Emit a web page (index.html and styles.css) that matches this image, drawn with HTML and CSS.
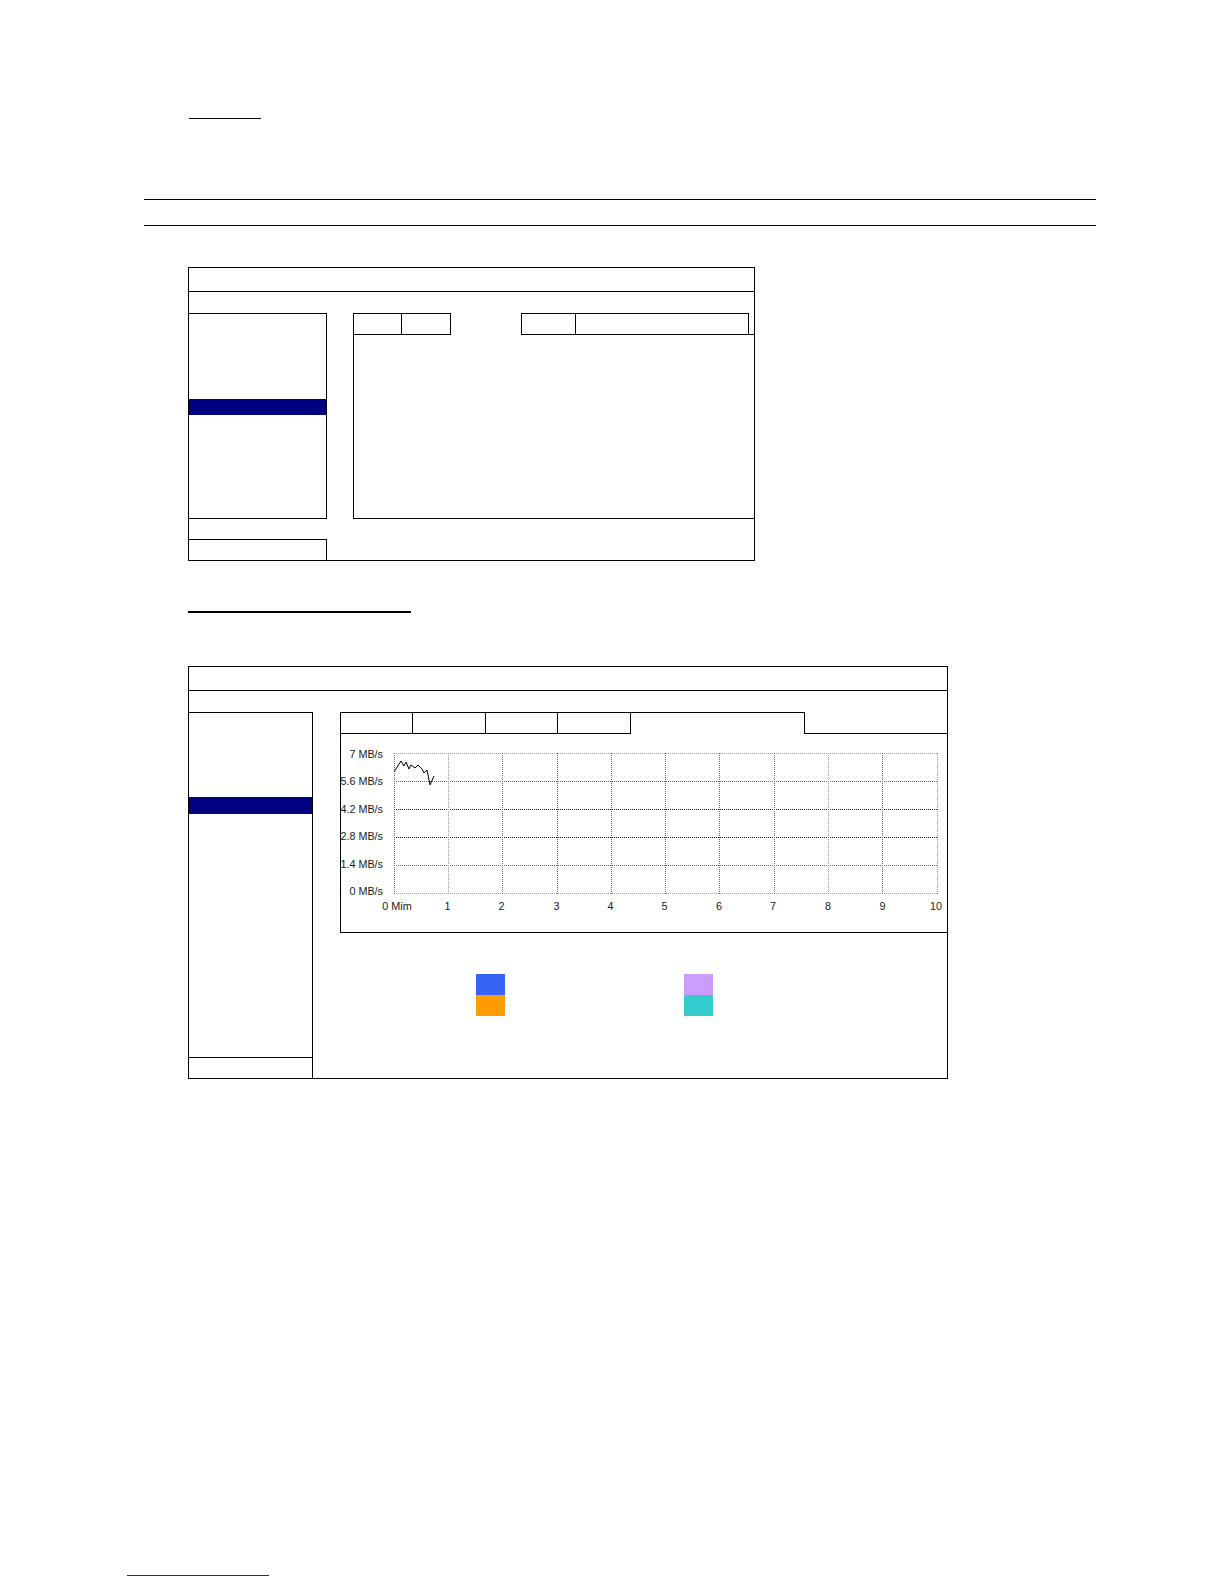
FILE: index.html
```html
<!DOCTYPE html>
<html lang="en">
<head>
<meta charset="utf-8">
<title>Network status</title>
<link rel="stylesheet" href="styles.css">
</head>
<body>
<div class="page">
  <div class="heading-rule"></div>
  <div class="rule-band"></div>

  <div class="window win-1">
    <div class="win-title"></div>
    <div class="win-main">
      <div class="side-menu">
        <div class="menu-list"><div class="menu-sel"></div></div>
      </div>
      <div class="content">
        <div class="tabs">
          <div class="tab tab-edge"></div>
          <div class="tab"></div>
          <div class="tab tab-active"></div>
          <div class="tab tab-edge"></div>
          <div class="tab"></div>
          <div class="tab-fill"></div>
        </div>
        <div class="panel"></div>
      </div>
    </div>
    <div class="win-foot"></div>
  </div>

  <div class="subheading-rule"></div>

  <div class="window win-2">
    <div class="win-title"></div>
    <div class="win-main">
      <div class="side-menu">
        <div class="menu-list"><div class="menu-sel"></div></div>
        <div class="menu-foot"></div>
      </div>
      <div class="content">
        <div class="tabs">
          <div class="tab tab-edge"></div>
          <div class="tab"></div>
          <div class="tab"></div>
          <div class="tab"></div>
          <div class="tab tab-active"></div>
          <div class="tab-fill"></div>
        </div>
        <div class="panel">
          <svg class="chart" width="606" height="198" viewBox="0 0 606 198">
            <g class="grid">
              <line class="g-light" x1="53" y1="19.5" x2="596" y2="19.5"/>
              <line class="g-mid" x1="53" y1="47.5" x2="596" y2="47.5"/>
              <line class="g-dark" x1="53" y1="75.5" x2="596" y2="75.5"/>
              <line class="g-dark" x1="53" y1="103.5" x2="596" y2="103.5"/>
              <line class="g-mid" x1="53" y1="131.5" x2="596" y2="131.5"/>
              <line class="g-light" x1="53" y1="159.5" x2="596" y2="159.5"/>
              <line class="g-mid" x1="53.5" y1="19" x2="53.5" y2="160"/>
              <line class="g-light" x1="107.5" y1="19" x2="107.5" y2="160"/>
              <line class="g-mid" x1="161.5" y1="19" x2="161.5" y2="160"/>
              <line class="g-mid" x1="216.5" y1="19" x2="216.5" y2="160"/>
              <line class="g-mid" x1="270.5" y1="19" x2="270.5" y2="160"/>
              <line class="g-mid" x1="324.5" y1="19" x2="324.5" y2="160"/>
              <line class="g-mid" x1="378.5" y1="19" x2="378.5" y2="160"/>
              <line class="g-mid" x1="433.5" y1="19" x2="433.5" y2="160"/>
              <line class="g-light" x1="487.5" y1="19" x2="487.5" y2="160"/>
              <line class="g-mid" x1="541.5" y1="19" x2="541.5" y2="160"/>
              <line class="g-light" x1="596.5" y1="19" x2="596.5" y2="160"/>
            </g>
            <polyline class="trace" points="53,38 60,27 63,32 65,28 68,35 70,31 74,34 77,31 81,35 83,39 86,36 89,51 93,42"/>
            <g class="axis-label y-label">
              <text x="42" y="24">7 MB/s</text>
              <text x="42" y="51">5.6 MB/s</text>
              <text x="42" y="78.5">4.2 MB/s</text>
              <text x="42" y="106">2.8 MB/s</text>
              <text x="42" y="133.5">1.4 MB/s</text>
              <text x="42" y="161">0 MB/s</text>
            </g>
            <g class="axis-label x-label">
              <text x="56" y="176">0 Mim</text>
              <text x="106.5" y="176">1</text>
              <text x="160.5" y="176">2</text>
              <text x="215.5" y="176">3</text>
              <text x="269.5" y="176">4</text>
              <text x="323.5" y="176">5</text>
              <text x="378" y="176">6</text>
              <text x="432" y="176">7</text>
              <text x="487" y="176">8</text>
              <text x="541.5" y="176">9</text>
              <text x="595" y="176">10</text>
            </g>
          </svg>
        </div>
        <div class="legend">
          <div class="legend-col">
            <div class="swatch sw-blue"></div>
            <div class="swatch sw-orange"></div>
          </div>
          <div class="legend-col">
            <div class="swatch sw-lilac"></div>
            <div class="swatch sw-teal"></div>
          </div>
        </div>
      </div>
    </div>
  </div>

  <div class="link-rule"></div>
</div>
</body>
</html>
```

FILE: styles.css
```css
html, body {
  margin: 0;
  padding: 0;
  background: #fff;
}

body {
  font-family: "Liberation Sans", Arial, sans-serif;
  color: #000;
}

.page {
  width: 1224px;
  height: 1584px;
  overflow: hidden;
}

.heading-rule {
  margin: 102px 0 0 189px;
  width: 72px;
  height: 16px;
  border-bottom: 1px solid #000;
}

.rule-band {
  margin: 80px 0 0 144px;
  width: 952px;
  height: 25px;
  border-top: 1px solid #000;
  border-bottom: 1px solid #000;
}

.window {
  box-sizing: border-box;
  border: 1px solid #000;
  display: flex;
  flex-direction: column;
}

.win-title {
  height: 23px;
  border-bottom: 1px solid #000;
}

.win-main {
  margin-top: 21px;
  display: flex;
}

.side-menu {
  box-sizing: border-box;
  border-top: 1px solid #000;
  border-right: 1px solid #000;
  display: flex;
  flex-direction: column;
}

.menu-list {
  flex: 1;
}

.menu-sel {
  background: #000080;
}

.content {
  flex: 1;
  display: flex;
  flex-direction: column;
}

.tabs {
  display: flex;
  height: 22px;
}

.tab {
  box-sizing: border-box;
  height: 22px;
  border-top: 1px solid #000;
  border-right: 1px solid #000;
  border-bottom: 1px solid #000;
}

.tab-edge {
  border-left: 1px solid #000;
}

.tab-fill {
  flex: 1;
  box-sizing: border-box;
  height: 22px;
  border-bottom: 1px solid #000;
}

.panel {
  box-sizing: border-box;
  border-left: 1px solid #000;
  border-bottom: 1px solid #000;
}

/* ---------- window 1 ---------- */
.win-1 {
  margin: 41px 0 0 188px;
  width: 567px;
  height: 294px;
}

.win-1 .win-main {
  height: 206px;
}

.win-1 .side-menu {
  width: 138px;
  border-bottom: 1px solid #000;
}

.win-1 .menu-list {
  padding-top: 85px;
}

.win-1 .menu-sel {
  height: 16px;
}

.win-1 .content {
  margin-left: 26px;
}

.win-1 .tab:nth-child(1) { width: 49px; }
.win-1 .tab:nth-child(2) { width: 49px; }
.win-1 .tab:nth-child(3) { width: 70px; }
.win-1 .tab:nth-child(4) { width: 55px; }
.win-1 .tab:nth-child(5) { width: 173px; }

.win-1 .tab-active {
  border: none;
}

.win-1 .panel {
  flex: 1;
}

.win-foot {
  box-sizing: border-box;
  margin-top: 20px;
  width: 138px;
  height: 21px;
  border-top: 1px solid #000;
  border-right: 1px solid #000;
}

/* ---------- heading 2 ---------- */
.subheading-rule {
  margin: 34px 0 0 188px;
  width: 223px;
  height: 16px;
  border-bottom: 2px solid #000;
}

/* ---------- window 2 ---------- */
.win-2 {
  margin: 53px 0 0 188px;
  width: 760px;
  height: 413px;
}

.win-2 .win-main {
  flex: 1;
}

.win-2 .side-menu {
  width: 124px;
}

.win-2 .menu-list {
  padding-top: 84px;
  border-bottom: 1px solid #000;
}

.win-2 .menu-sel {
  height: 17px;
}

.menu-foot {
  height: 20px;
}

.win-2 .content {
  margin-left: 27px;
}

.win-2 .tab:nth-child(1) { width: 73px; }
.win-2 .tab:nth-child(2) { width: 73px; }
.win-2 .tab:nth-child(3) { width: 72px; }
.win-2 .tab:nth-child(4) { width: 73px; }
.win-2 .tab:nth-child(5) { width: 174px; }

.win-2 .tab-active {
  border-bottom: none;
}

.win-2 .panel {
  height: 199px;
}

.chart {
  display: block;
}

.grid line {
  stroke-width: 1;
  stroke-dasharray: 1 1;
  shape-rendering: crispEdges;
}

.g-dark { stroke: #222; }
.g-mid { stroke: #666; }
.g-light { stroke: #999; }

.trace {
  fill: none;
  stroke: #000;
  stroke-width: 1;
}

.axis-label {
  font-family: "Liberation Sans", Arial, sans-serif;
  font-size: 10.8px;
  fill: #1a1a1a;
}

.y-label { text-anchor: end; }
.x-label { text-anchor: middle; }

.legend {
  display: flex;
  gap: 179px;
  padding: 41px 0 0 136px;
}

.legend-col {
  display: flex;
  flex-direction: column;
}

.swatch {
  width: 29px;
  height: 21px;
}

.sw-blue { background: #3764f6; }
.sw-orange { background: #ff9c00; }
.sw-lilac { background: #cc9cff; }
.sw-teal { background: #33cccc; }

/* ---------- footer link rule ---------- */
.link-rule {
  margin: 480px 0 0 127px;
  width: 142px;
  height: 16px;
  border-bottom: 1px solid #1e2c9c;
}
```
